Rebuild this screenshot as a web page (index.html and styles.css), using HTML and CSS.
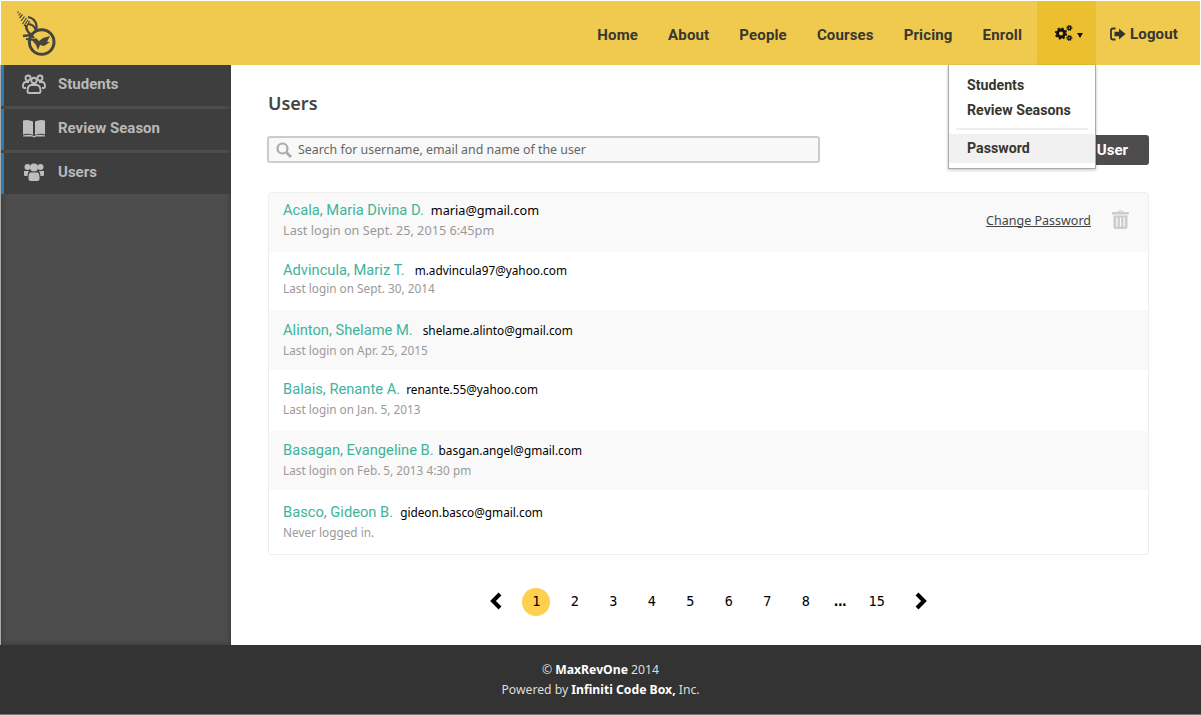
FILE: index.html

```html
<!DOCTYPE html>
<html lang="en">
<head>
  <meta charset="UTF-8" />
  <title>Users</title>
  <link rel="stylesheet" href="styles.css">
</head>
<body>
  <header class="topbar">
    <a class="logo" href="#">
      <svg width="42" height="50" viewBox="0 0 42 50" fill="none" stroke="#45443f">
        <circle cx="24.7" cy="31" r="12.3" stroke-width="3"/>
        <path d="M1.5 .5 L.5 2 M3.5 2 L1.5 4.5 M5.5 3.5 L2.5 7 M7.5 5.5 L4 10 M9.5 7 L5.5 13 M11 9 L7 15 M12.5 10 L9 17" stroke-width="1.2"/>
        <path d="M11 6 C17 7 21 12 19 20 C18 16 15 13 11 13" stroke-width="2.2"/>
        <path d="M9 14 C9 19 12 23 16 24" stroke-width="2.6"/>
        <path d="M6 25 L14 24 L17 27" stroke-width="2.4"/>
        <path d="M9 28 L18 29" stroke-width="1.8"/>
        <path d="M15 29 L19 27 L22 30 L26 27 L33 25 L30 31 L33 31 L27 35 L23 34 L21 39 L19 34 Z" fill="#45443f" stroke="none"/>
      </svg>
    </a>
    <nav class="mainnav">
      <a href="#">Home</a>
      <a href="#">About</a>
      <a href="#">People</a>
      <a href="#">Courses</a>
      <a href="#">Pricing</a>
      <a href="#">Enroll</a>
      <a href="#" class="settings">
        <svg width="18" height="16" viewBox="0 0 18 16" fill="none" stroke="#111">
          <circle cx="6" cy="8.5" r="3.5" stroke-width="2.8"/>
          <circle cx="6" cy="8.5" r="5.3" stroke-width="1.6" stroke-dasharray="2.1 2.06"/>
          <circle cx="14.3" cy="3" r="1.5" stroke-width="1.5"/>
          <circle cx="14.3" cy="3" r="2.6" stroke-width="1" stroke-dasharray="1.1 0.94"/>
          <circle cx="14.3" cy="13" r="1.5" stroke-width="1.5"/>
          <circle cx="14.3" cy="13" r="2.6" stroke-width="1" stroke-dasharray="1.1 0.94"/>
        </svg>
        <span class="caret"></span>
      </a>
      <a href="#" class="logout">
        <svg width="16" height="14" viewBox="0 0 16 14">
          <path d="M5.5 1.5 H3 Q1 1.5 1 3.5 V10.5 Q1 12.5 3 12.5 H5.5" fill="none" stroke="#333" stroke-width="1.8"/>
          <path d="M9 1.5 L15.5 7 L9 12.5 V9.3 H4.5 V4.7 H9 Z" fill="#333"/>
        </svg>
        Logout
      </a>
    </nav>
    <div class="dropdown">
      <a href="#">Students</a>
      <a href="#">Review Seasons</a>
      <div class="divider"></div>
      <a href="#" class="active">Password</a>
    </div>
  </header>

  <div class="middle">
    <aside class="sidebar">
      <a href="#" class="side-item">
        <svg width="24" height="20" viewBox="0 0 24 20" fill="none" stroke="#bdbdbd" stroke-width="1.9">
          <circle cx="6" cy="4" r="2.5"/>
          <circle cx="18" cy="4" r="2.5"/>
          <circle cx="12" cy="6.5" r="2.7"/>
          <path d="M4 14 H2.5 Q1 14 1 12 Q1 8 4 8 H7"/>
          <path d="M20 14 H21.5 Q23 14 23 12 Q23 8 20 8 H17"/>
          <path d="M7 19 Q5.5 19 5.5 17 Q5.5 11.5 9 11 H15 Q18.5 11.5 18.5 17 Q18.5 19 17 19 Z"/>
        </svg>
        Students
      </a>
      <a href="#" class="side-item">
        <svg width="24" height="20" viewBox="0 0 24 20" fill="#bdbdbd">
          <path d="M1 2.5 Q6 1 11 3.5 V17 Q6 15 1 16.5 Z"/>
          <path d="M23 2.5 Q18 1 13 3.5 V17 Q18 15 23 16.5 Z"/>
          <path d="M1 17.5 Q7 16 12 18 Q17 16 23 17.5 V18.5 H14 L12 19.5 L10 18.5 H1 Z"/>
        </svg>
        Review Season
      </a>
      <a href="#" class="side-item">
        <svg width="24" height="20" viewBox="0 0 24 20" fill="#bdbdbd">
          <circle cx="5.5" cy="5" r="3"/>
          <circle cx="18.5" cy="5" r="3"/>
          <circle cx="12" cy="5.5" r="4"/>
          <path d="M2 9 H7 Q5.5 11 5.5 14 H3 Q2 14 2 12.5 Z"/>
          <path d="M22 9 H17 Q18.5 11 18.5 14 H21 Q22 14 22 12.5 Z"/>
          <path d="M8 10.5 H16 Q17.5 11.5 17.5 15 V17 Q17.5 19 15.5 19 H8.5 Q6.5 19 6.5 17 V15 Q6.5 11.5 8 10.5 Z"/>
        </svg>
        Users
      </a>
    </aside>

    <main class="content">
      <h1 class="page-title">Users</h1>
      <div class="toolbar">
        <label class="search">
          <svg width="16" height="16" viewBox="0 0 16 16" fill="none" stroke="#aaa">
            <circle cx="6.5" cy="6.5" r="5" stroke-width="2.2"/>
            <path d="M10.5 10.5 L15 15" stroke-width="2.8"/>
          </svg>
          <input type="text" placeholder="Search for username, email and name of the user" />
        </label>
        <a href="#" class="add-btn">Add User</a>
      </div>

      <div class="user-list">
        <div class="user-row">
          <div>
            <div class="user-top"><a href="#" class="user-name">Acala, Maria Divina D.</a><span class="user-email">maria@gmail.com</span></div>
            <div class="user-login">Last login on Sept. 25, 2015 6:45pm</div>
          </div>
          <div class="user-actions">
            <a href="#" class="change-pw">Change Password</a>
            <svg width="17" height="19" viewBox="0 0 17 19" fill="#ccc">
              <path d="M5.5 2 Q6 0.5 7 0.5 H10 Q11 0.5 11.5 2 H16 Q17 2 17 3 V4.5 H0 V3 Q0 2 1 2 Z M7 2 H10 V1.6 H7 Z" fill-rule="evenodd"/>
              <path d="M1.5 5.5 H15.5 V16.5 Q15.5 19 13.5 19 H3.5 Q1.5 19 1.5 16.5 Z M4.2 7.5 V16.5 H5.6 V7.5 Z M7.8 7.5 V16.5 H9.2 V7.5 Z M11.4 7.5 V16.5 H12.8 V7.5 Z" fill-rule="evenodd"/>
            </svg>
          </div>
        </div>
        <div class="user-row">
          <div>
            <div class="user-top"><a href="#" class="user-name">Advincula, Mariz T.</a><span class="user-email">m.advincula97@yahoo.com</span></div>
            <div class="user-login">Last login on Sept. 30, 2014</div>
          </div>
        </div>
        <div class="user-row">
          <div>
            <div class="user-top"><a href="#" class="user-name">Alinton, Shelame M.</a><span class="user-email">shelame.alinto@gmail.com</span></div>
            <div class="user-login">Last login on Apr. 25, 2015</div>
          </div>
        </div>
        <div class="user-row">
          <div>
            <div class="user-top"><a href="#" class="user-name">Balais, Renante A.</a><span class="user-email">renante.55@yahoo.com</span></div>
            <div class="user-login">Last login on Jan. 5, 2013</div>
          </div>
        </div>
        <div class="user-row">
          <div>
            <div class="user-top"><a href="#" class="user-name">Basagan, Evangeline B.</a><span class="user-email">basgan.angel@gmail.com</span></div>
            <div class="user-login">Last login on Feb. 5, 2013 4:30 pm</div>
          </div>
        </div>
        <div class="user-row">
          <div>
            <div class="user-top"><a href="#" class="user-name">Basco, Gideon B.</a><span class="user-email">gideon.basco@gmail.com</span></div>
            <div class="user-login">Never logged in.</div>
          </div>
        </div>
      </div>

      <div class="pager">
        <a href="#" class="pg-arrow prev">
          <svg width="14" height="18" viewBox="0 0 14 18" fill="none" stroke="#000" stroke-width="4"><path d="M11 2 L4 9 L11 16"/></svg>
        </a>
        <a href="#" class="pg current">1</a>
        <a href="#" class="pg">2</a>
        <a href="#" class="pg">3</a>
        <a href="#" class="pg">4</a>
        <a href="#" class="pg">5</a>
        <a href="#" class="pg">6</a>
        <a href="#" class="pg">7</a>
        <a href="#" class="pg">8</a>
        <span class="pg dots">...</span>
        <a href="#" class="pg">15</a>
        <a href="#" class="pg-arrow next">
          <svg width="14" height="18" viewBox="0 0 14 18" fill="none" stroke="#000" stroke-width="4"><path d="M3 2 L10 9 L3 16"/></svg>
        </a>
      </div>
    </main>
  </div>

  <footer class="footer">
    <div>&copy; <strong>MaxRevOne</strong> 2014</div>
    <div>Powered by <strong>Infiniti Code Box,</strong> Inc.</div>
  </footer>
</body>
</html>
```

FILE: styles.css

```css
* {
  box-sizing: border-box;
}
html, body {
  margin: 0;
  height: 715px;
  overflow: hidden;
}
body {
  display: flex;
  flex-direction: column;
  font-family: "Noto Sans", Arial, sans-serif;
  background: #fff;
  color: #444;
}
a {
  text-decoration: none;
  color: inherit;
}

/* top bar */
.topbar {
  position: relative;
  z-index: 5;
  height: 64px;
  margin: 1px 1px 0;
  background: #efca4f;
  display: flex;
  justify-content: space-between;
  align-items: stretch;
}
.logo {
  padding: 10px 0 0 16px;
}
.mainnav {
  display: flex;
  align-items: stretch;
  padding-right: 22px;
  font-family: Roboto, Arial, sans-serif;
}
.mainnav a {
  display: flex;
  align-items: center;
  padding: 3px 15px 0;
  font-size: 15px;
  font-weight: 700;
  letter-spacing: 0.15px;
  color: #38362f;
}
.mainnav .settings {
  width: 59px;
  padding: 0 0 0 18px;
  gap: 4px;
  background: #ebbf2f;
}
.caret {
  margin-top: 4px;
  border: 3.5px solid transparent;
  border-top: 5px solid #111;
  border-bottom: 0;
}
.mainnav .logout {
  gap: 4px;
  padding: 1px 0 0 14px;
}
.dropdown {
  position: absolute;
  top: 64px;
  right: 104px;
  width: 148px;
  height: 104px;
  padding-top: 8px;
  background: #fff;
  border: 1px solid #aaa;
  border-top: 0;
  box-shadow: 0 1px 3px rgba(0,0,0,0.25);
  font-family: Roboto, Arial, sans-serif;
  font-size: 14.2px;
  font-weight: 700;
  color: #38362f;
}
.dropdown a {
  display: block;
  padding: 0 18px;
  line-height: 25px;
}
.dropdown .divider {
  height: 2px;
  margin: 5px 7px 4px;
  background: #eee;
}
.dropdown .active {
  height: 29px;
  line-height: 28px;
  background: #f1f1f1;
}

/* sidebar + content */
.middle {
  flex: 1;
  display: flex;
  min-height: 0;
}
.sidebar {
  width: 231px;
  border-left: 1px solid #aaa;
  background: #4d4d4d;
  box-shadow: inset 0 0 6px rgba(0,0,0,0.3);
}
.side-item {
  display: flex;
  align-items: center;
  gap: 12px;
  height: 41px;
  margin-bottom: 3px;
  padding: 0 0 4px 18px;
  background: #3e3e3e;
  border-left: 3px solid #2a7db5;
  font-family: Roboto, Arial, sans-serif;
  font-size: 15px;
  font-weight: 700;
  color: #b9b9b9;
}
.content {
  flex: 1;
  padding: 0 52px 0 37px;
}
.page-title {
  margin: 26px 0 20px;
  font-size: 18px;
  line-height: 24px;
  font-weight: 600;
  color: #444;
}
.toolbar {
  display: flex;
  justify-content: space-between;
  align-items: flex-start;
  height: 30px;
}
.search {
  display: flex;
  align-items: center;
  gap: 6px;
  width: 553px;
  height: 27px;
  margin: 1px 0 0 -1px;
  padding-left: 7px;
  background: #f8f8f8;
  border: 2px solid #ccc;
  border-radius: 3px;
}
.search input {
  flex: 1;
  border: 0;
  padding: 0;
  background: transparent;
  font: 12.4px "Noto Sans", Arial, sans-serif;
}
.search input::placeholder {
  color: #666;
}
.add-btn {
  display: block;
  width: 90px;
  line-height: 30px;
  padding-right: 21px;
  text-align: right;
  background: #4d4d4d;
  border-radius: 3px;
  font-family: Roboto, Arial, sans-serif;
  font-size: 15px;
  font-weight: 700;
  color: #fff;
}

/* user rows */
.user-list {
  margin-top: 27px;
  border: 1px solid #eee;
  border-radius: 3px;
}
.user-row {
  display: flex;
  justify-content: space-between;
  align-items: center;
  height: 59px;
  padding: 0 15px 3px 14px;
}
.user-row:nth-child(odd) {
  background: #f9f9f9;
}
/* the rows are not quite even in the design */
.user-row:nth-child(1) { padding-bottom: 7px; }
.user-row:nth-child(2) { height: 58px; padding-bottom: 6px; }
.user-row:nth-child(3) { height: 60px; padding-bottom: 1px; }
.user-row:nth-child(4) { height: 61px; padding-bottom: 5px; }
.user-row:nth-child(6) { height: 64px; padding-bottom: 2px; }
.user-row:nth-child(1) .user-email,
.user-row:nth-child(1) .user-login { font-size: 12.7px; }
.user-row:nth-child(2) .user-login { margin-top: -1px; }
.user-row:nth-child(2) .user-top { gap: 10px; }
.user-row:nth-child(3) .user-top { gap: 10px; }
.user-row:nth-child(4) .user-top { gap: 6px; }
.user-row:nth-child(5) .user-top { gap: 5px; }
.user-top {
  display: flex;
  align-items: baseline;
  gap: 7px;
  line-height: 20px;
}
.user-name {
  font-family: Roboto, Arial, sans-serif;
  font-size: 14.7px;
  color: #3fb39b;
}
.user-email {
  font-size: 11.8px;
  color: #000;
}
.user-login {
  margin-top: 1px;
  font-size: 11.8px;
  line-height: 18px;
  color: #999;
}
.user-actions {
  display: flex;
  align-items: center;
  gap: 21px;
  padding-right: 4px;
}
.change-pw {
  padding-top: 2px;
  font-size: 12.5px;
  color: #444;
  text-decoration: underline;
}

/* pagination */
.pager {
  display: flex;
  justify-content: center;
  align-items: center;
  gap: 10.5px;
  margin-top: 33px;
  height: 28px;
}
.pg {
  width: 28px;
  height: 28px;
  line-height: 26px;
  text-align: center;
  font-family: "DejaVu Sans Mono", monospace;
  font-size: 13.5px;
  color: #000;
}
.pg.current {
  background: #fdd04f;
  border-radius: 50%;
}
.pg.dots {
  width: 20px;
  margin: 0 4px 0 -2px;
  font-weight: 700;
  letter-spacing: -4px;
}
.pg-arrow {
  display: flex;
  margin-top: -2px;
}
.pg-arrow.next {
  margin-left: 13px;
}
.pg-arrow.prev {
  margin-right: 9px;
}

.footer {
  height: 70px;
  padding-top: 15px;
  background: #333;
  border-bottom: 1px solid #777;
  text-align: center;
  font-size: 12.2px;
  line-height: 20px;
  color: #ddd;
}
.footer strong {
  color: #fff;
}
```
